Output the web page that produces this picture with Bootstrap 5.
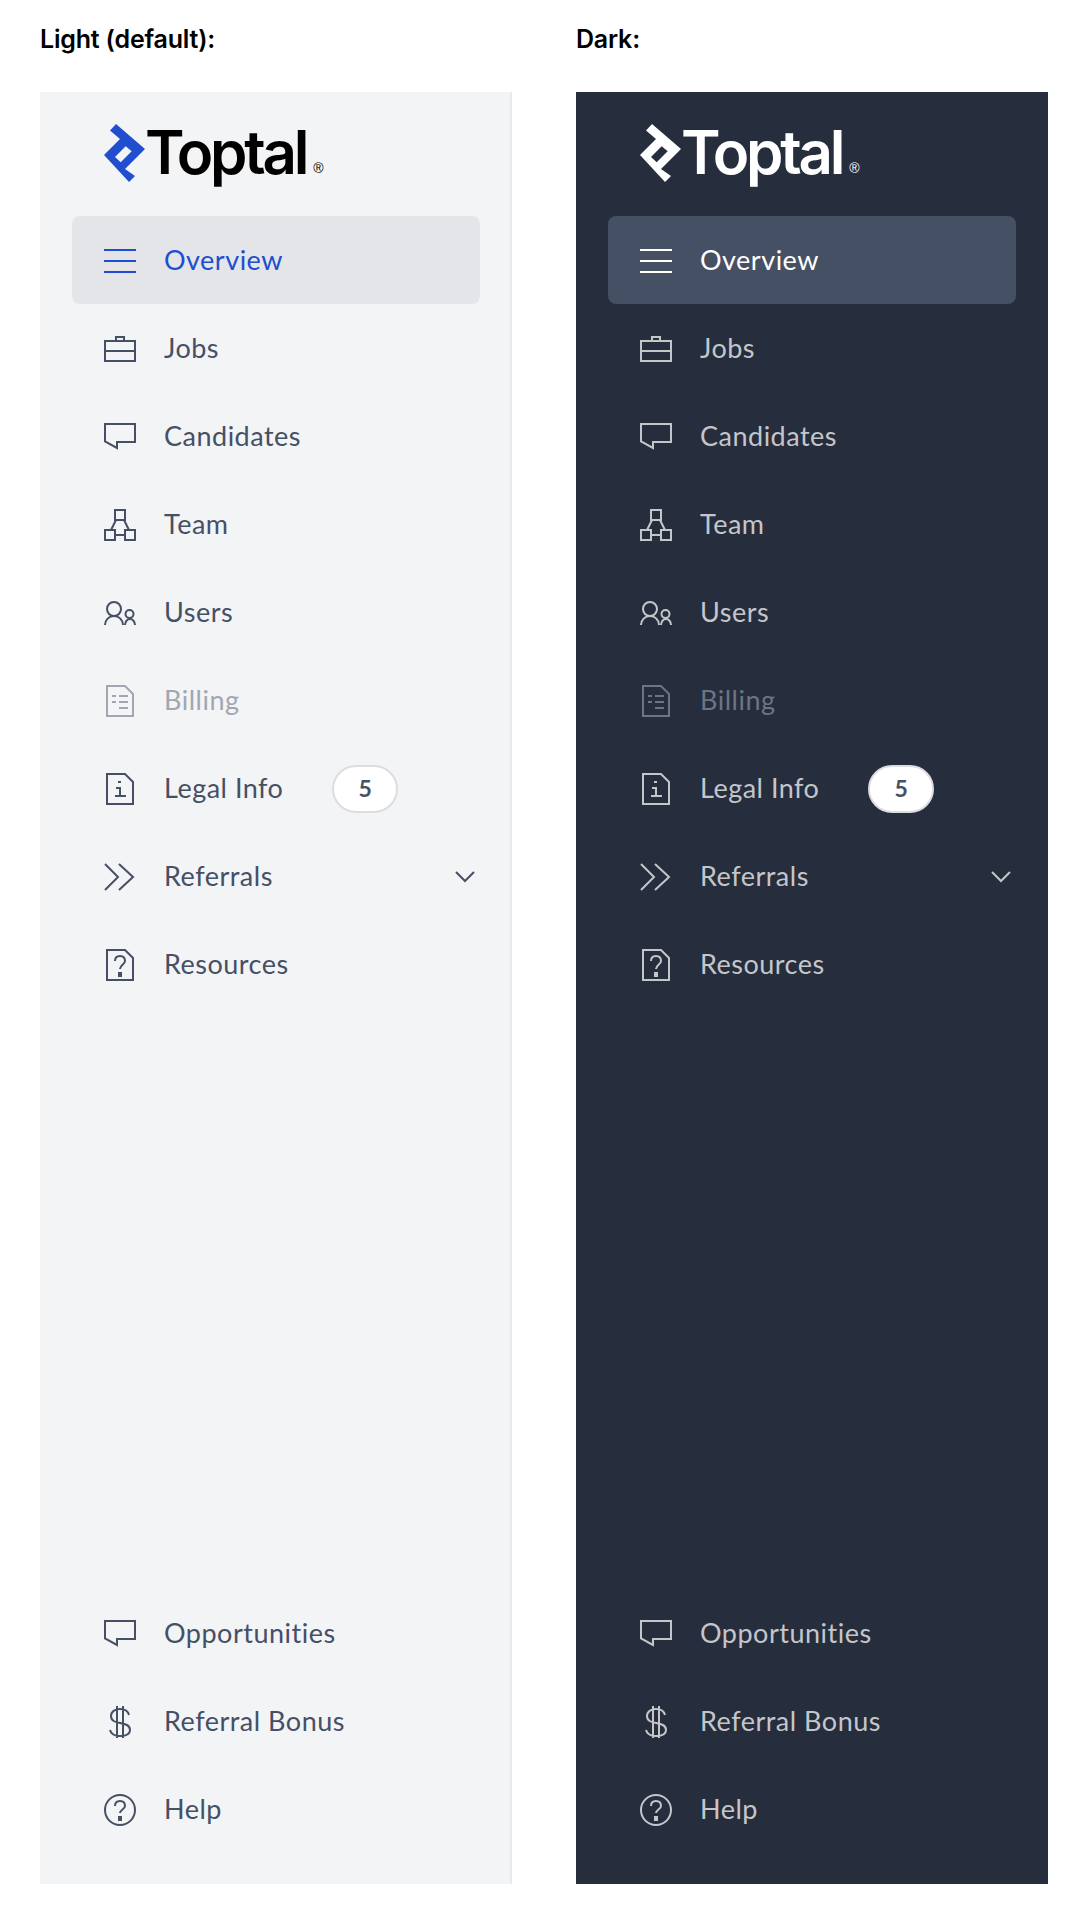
<!DOCTYPE html>
<html lang="en">
<head>
  <meta charset="UTF-8" />
  <title>Sidebar</title>
  <link href="https://cdn.jsdelivr.net/npm/bootstrap@5.3.0/dist/css/bootstrap.min.css" rel="stylesheet" />
  <style>
    body { background: #fff; font-family: Lato, "Open Sans", sans-serif; font-variant-ligatures: none; }
    .variants { padding: 0 42px 40px 40px; gap: 64px; }
    .variant { width: 472px; }
    .variant-title { height: 92px; margin: 0; padding-top: 21px; font-family: Inter, sans-serif; font-size: 25px; line-height: 36px; font-weight: 600; letter-spacing: -.2px; color: #000; }
    .side { height: 1792px; padding: 0 32px 31px; }
    .side-light { padding-right: 30px; background: #f3f4f6; border-right: 2px solid #e8e9ec; color: #455065; --mark: #204ecf; --word: #000; }
    .side-dark { background: #262d3d; color: #c4c6ca; --mark: #fff; --word: #fff; }
    .brand { height: 124px; padding: 32px 0 0 32px; color: var(--word); }
    .brand svg { width: 41px; height: 58px; flex: none; }
    .brand-name { font-family: Inter, sans-serif; font-weight: 600; font-size: 60px; line-height: 56px; letter-spacing: -3.2px; }
    .brand-reg { font-family: "Liberation Sans", sans-serif; font-size: 14px; align-self: flex-start; margin: 37px 0 0 7px; line-height: 14px; }
    .side .nav-link { height: 88px; padding: 1px 0 0 32px; border-radius: 8px; color: inherit; font-size: 27px; letter-spacing: .5px; }
    .side .nav-link svg { width: 32px; height: 32px; flex: none; margin-right: 28px; }
    .side-light .nav-link.active { background: #e4e5e9; color: #204ecf; }
    .side-dark .nav-link.active { background: #455065; color: #fff; }
    .side-light .nav-link.disabled { color: #a1a7b2; }
    .side-dark .nav-link.disabled { color: #6e7481; }
    .count { width: 66px; height: 48px; margin-left: 49px; border: 2px solid #dcdde0; border-radius: 24px; background: #fff; color: #455065; font-size: 23px; font-weight: 700; }
    .side .nav-link .caret { width: 20px; height: 12px; margin: 0 5px 0 auto; }
    .ico { fill: none; stroke: currentColor; stroke-width: 2; }
  </style>
</head>
<body>
  <svg width="0" height="0" class="position-absolute">
    <symbol id="i-menu" viewBox="0 0 32 32"><path class="ico" d="M0 5h32M0 16h32M0 27h32"/></symbol>
    <symbol id="i-jobs" viewBox="0 0 32 32"><path class="ico" d="M1 8h30v20H1zM1 18h30M12 8V4h8v4"/></symbol>
    <symbol id="i-chat" viewBox="0 0 32 32"><path class="ico" d="M1 3h30v18H13v6L1 20.5z"/></symbol>
    <symbol id="i-team" viewBox="0 0 32 32"><path class="ico" d="M11 1h10v10H11zM1 21h10v10H1zM21 21h10v10H21zM11 26h10M12 11 7 21M20 11l5 10"/></symbol>
    <symbol id="i-users" viewBox="0 0 32 32"><circle class="ico" cx="10" cy="12" r="7"/><path class="ico" d="M1 28c0-5 4-9 9-9s9 4 9 9"/><circle class="ico" cx="25.5" cy="17" r="4"/><path class="ico" d="M21 28c0-3 2-6 5-6s5 3 5 6"/></symbol>
    <symbol id="i-bill" viewBox="0 0 32 32"><path class="ico" d="M3 1h18l8 8v22H3zM8 11h4M15 11h9M8 17h4M15 17h9M15 23h9"/></symbol>
    <symbol id="i-info" viewBox="0 0 32 32"><path class="ico" d="M3 1h18l8 8v22H3z"/><path class="ico" d="M12 15h4v8M11 23h11M14 9h3"/></symbol>
    <symbol id="i-ref" viewBox="0 0 32 32"><path class="ico" d="M1 3l13 13L1 29M15 3l14 13-14 13"/></symbol>
    <symbol id="i-res" viewBox="0 0 32 32"><path class="ico" d="M3 1h18l8 8v22H3z"/><path class="ico" d="M11 12c0-3 2-5 5-5s5 2 5 5-5 4-5 8M15 24h2v3h-2z"/></symbol>
    <symbol id="i-dollar" viewBox="0 0 32 32"><path class="ico" d="M25 9c-1-4-5-6-9-6s-9 2-9 7 4 6 9 7 10 2 10 7-5 6-10 6-9-2-10-6M13 0v32M19 0v32"/></symbol>
    <symbol id="i-help" viewBox="0 0 32 32"><circle class="ico" cx="16" cy="16" r="15"/><path class="ico" d="M11 12c0-3 2-5 5-5s5 2 5 5-5 4-5 7M15 23h2v3h-2z"/></symbol>
    <symbol id="i-caret" viewBox="0 0 20 12"><path class="ico" d="M1 1l9 9 9-9"/></symbol>
    <symbol id="i-mark" viewBox="0 0 41 58"><path fill="var(--mark)" fill-rule="evenodd" d="M12 0 41 25 21 45 31 52 25 58 0 31 16 15 6 6.5zM21.7 22.3 27.7 27.3 16.7 38.3 11 33z"/></symbol>
  </svg>

  <main class="d-flex variants">
    <section class="variant">
      <h2 class="variant-title">Light (default):</h2>
      <aside class="side side-light d-flex flex-column justify-content-between">
        <div>
          <div class="brand d-flex align-items-start"><svg><use href="#i-mark"/></svg><span class="brand-name">Toptal</span><span class="brand-reg">®</span></div>
          <nav class="nav flex-column">
            <a class="nav-link active d-flex align-items-center" href="#"><svg><use href="#i-menu"/></svg>Overview</a>
            <a class="nav-link d-flex align-items-center" href="#"><svg><use href="#i-jobs"/></svg>Jobs</a>
            <a class="nav-link d-flex align-items-center" href="#"><svg><use href="#i-chat"/></svg>Candidates</a>
            <a class="nav-link d-flex align-items-center" href="#"><svg><use href="#i-team"/></svg>Team</a>
            <a class="nav-link d-flex align-items-center" href="#"><svg><use href="#i-users"/></svg>Users</a>
            <a class="nav-link disabled d-flex align-items-center" href="#"><svg><use href="#i-bill"/></svg>Billing</a>
            <a class="nav-link d-flex align-items-center" href="#"><svg><use href="#i-info"/></svg>Legal Info<span class="count d-flex align-items-center justify-content-center">5</span></a>
            <a class="nav-link d-flex align-items-center" href="#"><svg><use href="#i-ref"/></svg>Referrals<svg class="caret"><use href="#i-caret"/></svg></a>
            <a class="nav-link d-flex align-items-center" href="#"><svg><use href="#i-res"/></svg>Resources</a>
          </nav>
        </div>
        <nav class="nav flex-column">
          <a class="nav-link d-flex align-items-center" href="#"><svg><use href="#i-chat"/></svg>Opportunities</a>
          <a class="nav-link d-flex align-items-center" href="#"><svg><use href="#i-dollar"/></svg>Referral Bonus</a>
          <a class="nav-link d-flex align-items-center" href="#"><svg><use href="#i-help"/></svg>Help</a>
        </nav>
      </aside>
    </section>
    <section class="variant">
      <h2 class="variant-title">Dark:</h2>
      <aside class="side side-dark d-flex flex-column justify-content-between">
        <div>
          <div class="brand d-flex align-items-start"><svg><use href="#i-mark"/></svg><span class="brand-name">Toptal</span><span class="brand-reg">®</span></div>
          <nav class="nav flex-column">
            <a class="nav-link active d-flex align-items-center" href="#"><svg><use href="#i-menu"/></svg>Overview</a>
            <a class="nav-link d-flex align-items-center" href="#"><svg><use href="#i-jobs"/></svg>Jobs</a>
            <a class="nav-link d-flex align-items-center" href="#"><svg><use href="#i-chat"/></svg>Candidates</a>
            <a class="nav-link d-flex align-items-center" href="#"><svg><use href="#i-team"/></svg>Team</a>
            <a class="nav-link d-flex align-items-center" href="#"><svg><use href="#i-users"/></svg>Users</a>
            <a class="nav-link disabled d-flex align-items-center" href="#"><svg><use href="#i-bill"/></svg>Billing</a>
            <a class="nav-link d-flex align-items-center" href="#"><svg><use href="#i-info"/></svg>Legal Info<span class="count d-flex align-items-center justify-content-center">5</span></a>
            <a class="nav-link d-flex align-items-center" href="#"><svg><use href="#i-ref"/></svg>Referrals<svg class="caret"><use href="#i-caret"/></svg></a>
            <a class="nav-link d-flex align-items-center" href="#"><svg><use href="#i-res"/></svg>Resources</a>
          </nav>
        </div>
        <nav class="nav flex-column">
          <a class="nav-link d-flex align-items-center" href="#"><svg><use href="#i-chat"/></svg>Opportunities</a>
          <a class="nav-link d-flex align-items-center" href="#"><svg><use href="#i-dollar"/></svg>Referral Bonus</a>
          <a class="nav-link d-flex align-items-center" href="#"><svg><use href="#i-help"/></svg>Help</a>
        </nav>
      </aside>
    </section>
  </main>
  <script src="https://cdn.jsdelivr.net/npm/bootstrap@5.3.0/dist/js/bootstrap.bundle.min.js"></script>
</body>
</html>
